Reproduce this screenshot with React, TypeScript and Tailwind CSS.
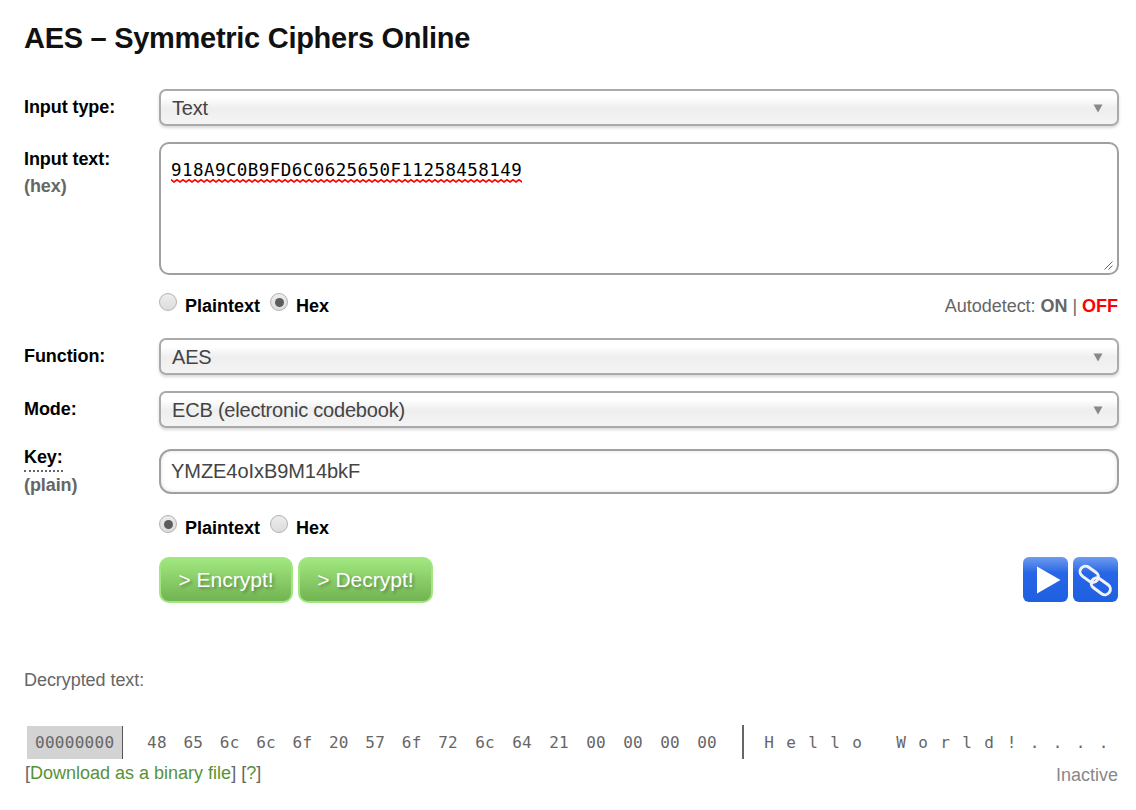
import type { ReactNode } from "react";

const bytes = ["48", "65", "6c", "6c", "6f", "20", "57", "6f", "72", "6c", "64", "21", "00", "00", "00", "00"];
const letters = ["H", "e", "l", "l", "o", " ", "W", "o", "r", "l", "d"];
const marks = ["!", ".", ".", ".", "."];

function Select({ children }: { children: ReactNode }) {
  return (
    <div className="flex h-[37px] w-[960px] items-center justify-between rounded-[7px] border-2 border-[#aaa] bg-linear-to-b from-white from-20% via-[#eee] via-52% to-[#f4f4f4] pr-[14px] pl-[11px] text-[20px] text-[#444] shadow-[0_2px_3px_rgba(0,0,0,0.15)]">
      <span className="pt-0.5 leading-[33px] tracking-[-0.2px]">{children}</span>
      <svg width="10" height="9" viewBox="0 0 10 9" className="mt-0.5">
        <path d="M.5 .5h9L5 8.5z" fill="#888" />
      </svg>
    </div>
  );
}

function Radio({ checked, label }: { checked: boolean; label: string }) {
  return (
    <div className="flex items-start">
      <span className="flex size-[18px] items-center justify-center rounded-full border border-[#b2b2b2] bg-linear-to-b from-[#ededed] to-[#dcdcdc]">
        {checked && <span className="size-[9px] rounded-full bg-[#5d5d5d]" />}
      </span>
      <span className="mt-[3px] ml-2 text-[18px] leading-5 font-bold whitespace-nowrap">{label}</span>
    </div>
  );
}

function Radios({ hex }: { hex: boolean }) {
  return (
    <div className="flex">
      <div className="w-[111px]">
        <Radio checked={!hex} label="Plaintext" />
      </div>
      <Radio checked={hex} label="Hex" />
    </div>
  );
}

function GreenButton({ children }: { children: ReactNode }) {
  return (
    <button className="h-[46px] rounded-[10px] border-2 border-[#a1e77f] bg-linear-to-b from-[#a1e77f] to-[#72b352] text-center text-[21px] whitespace-nowrap text-white [text-shadow:2px_2px_3px_rgba(0,0,0,0.3)]">
      {children}
    </button>
  );
}

export default function App() {
  return (
    <main className="h-[810px] w-[1136px] overflow-hidden bg-white pl-6 font-['Liberation_Sans',Arial,sans-serif] text-[18px] leading-5 text-black">
      <h1 className="h-[89px] pt-[20px] text-[29px] leading-9 font-bold tracking-[-0.28px] text-[#111]">AES – Symmetric Ciphers Online</h1>

      <section className="grid grid-cols-[135px_960px]">
        <div className="h-[53px] pt-2 font-bold tracking-[-0.08px]">Input type:</div>
        <Select>Text</Select>

        <div className="pt-[7px] font-bold tracking-[-0.08px]">
          <div>Input text:</div>
          <div className="mt-[7px] text-[#666]">(hex)</div>
        </div>
        <div className="flex h-[133px] items-end justify-between rounded-[10px] border-2 border-[#a0a0a0]">
          <div className="self-start pt-[14px] pl-[10px]">
            <div className="font-['DejaVu_Sans_Mono',monospace] text-[17.5px] leading-6 tracking-[0.44px]">918A9C0B9FD6C0625650F11258458149</div>
            <svg width="351" height="4" className="-mt-[3px] block">
              <defs>
                <pattern id="squiggle" width="6" height="4" patternUnits="userSpaceOnUse">
                  <path d="M-1.5 0 0 .8 3 3 6 .8 7.5 0" fill="none" stroke="#f00" strokeWidth="1.6" />
                </pattern>
              </defs>
              <rect width="351" height="4" fill="url(#squiggle)" />
            </svg>
          </div>
          <svg width="9" height="9" viewBox="0 0 9 9" className="mr-1 mb-[3px]" stroke="#666" strokeWidth="1">
            <path d="M.5 8.5l8-8M4.5 8.5l4-4" />
          </svg>
        </div>

        <div />
        <div className="flex h-[63px] justify-between pt-[18px]">
          <Radios hex={true} />
          <div className="mt-[3px] mr-px tracking-[-0.03px] text-[#666]">
            Autodetect: <b>ON</b> | <b className="text-[#f00]">OFF</b>
          </div>
        </div>

        <div className="h-[53px] pt-2 font-bold tracking-[-0.08px]">Function:</div>
        <Select>AES</Select>

        <div className="h-[58px] pt-2 font-bold tracking-[-0.08px]">Mode:</div>
        <Select>ECB (electronic codebook)</Select>

        <div className="-mt-[2px] font-bold tracking-[-0.08px]">
          <div className="h-[25px] w-[39px] border-b-2 border-dotted border-[#666]">Key:</div>
          <div className="mt-[3px] text-[#666]">(plain)</div>
        </div>
        <div className="flex h-[45px] items-center rounded-[12px] border-2 border-[#a0a0a0] pb-0.5 pl-[10px] text-[20px] tracking-[-0.06px] text-[#444] shadow-[inset_0_0_4px_rgba(0,0,0,0.12)]">
          YMZE4oIxB9M14bkF
        </div>

        <div />
        <div className="h-[63px] pt-5">
          <Radios hex={false} />
        </div>

        <div />
        <div className="-mt-px flex h-[46px] justify-between">
          <div className="grid grid-cols-[134px_135px] gap-[5px]">
            <GreenButton>&gt; Encrypt!</GreenButton>
            <GreenButton>&gt; Decrypt!</GreenButton>
          </div>
          <div className="mr-px flex gap-[5px]">
            <div className="flex size-[45px] items-center justify-center rounded-md bg-linear-to-b from-[#6f9bee] via-[#2766e5] via-35% to-[#1e60e2]">
              <svg width="45" height="45" viewBox="0 0 45 45">
                <path d="M14 9.5 37.5 23 14 36.5z" fill="#fff" />
              </svg>
            </div>
            <div className="flex size-[45px] items-center justify-center rounded-md bg-linear-to-b from-[#6f9bee] via-[#2766e5] via-35% to-[#1e60e2]">
              <svg width="45" height="45" viewBox="0 0 45 45" fill="none" stroke="#f2f2f2" strokeWidth="3">
                <rect x="-10" y="-5.5" width="20" height="11" rx="5.5" transform="translate(16.2 17.3) rotate(36)" />
                <rect x="-10.5" y="-5.5" width="21" height="11" rx="5.5" transform="translate(27.8 29.3) rotate(36)" />
              </svg>
            </div>
          </div>
        </div>
      </section>

      <div className="mt-[67px] tracking-[-0.06px] text-[#666]">Decrypted text:</div>

      <div className="mt-[35px] ml-[3px] flex h-[34px] items-center font-['DejaVu_Sans_Mono',monospace] text-[16px] text-[#666]">
        <div className="mt-px flex h-[33px] w-[96px] items-center border-r border-[#555] bg-[#d3d3d3] pl-2 tracking-[0.28px]">00000000</div>
        <div className="ml-6 grid w-[595px] grid-cols-[repeat(8,36.4px)_repeat(8,37px)] pt-0.5 tracking-[0.28px]">
          {bytes.map((b, i) => (
            <span key={i}>{b}</span>
          ))}
        </div>
        <div className="h-[34px] w-0.5 bg-[#666]" />
        <div className="ml-[14px] flex pt-0.5 text-center whitespace-pre">
          {letters.map((c, i) => (
            <span key={i} className="w-[22px]">{c}</span>
          ))}
          {marks.map((c, i) => (
            <span key={i} className="w-[23px]">{c}</span>
          ))}
        </div>
      </div>

      <div className="flex w-[1094px] justify-between pt-[4px] text-[#666]">
        <div className="pl-px">
          [<a className="text-[#569337]">Download as a binary file</a>] [<a className="text-[#569337]">?</a>]
        </div>
        <div className="pt-0.5 text-[#888]">Inactive</div>
      </div>
    </main>
  );
}
